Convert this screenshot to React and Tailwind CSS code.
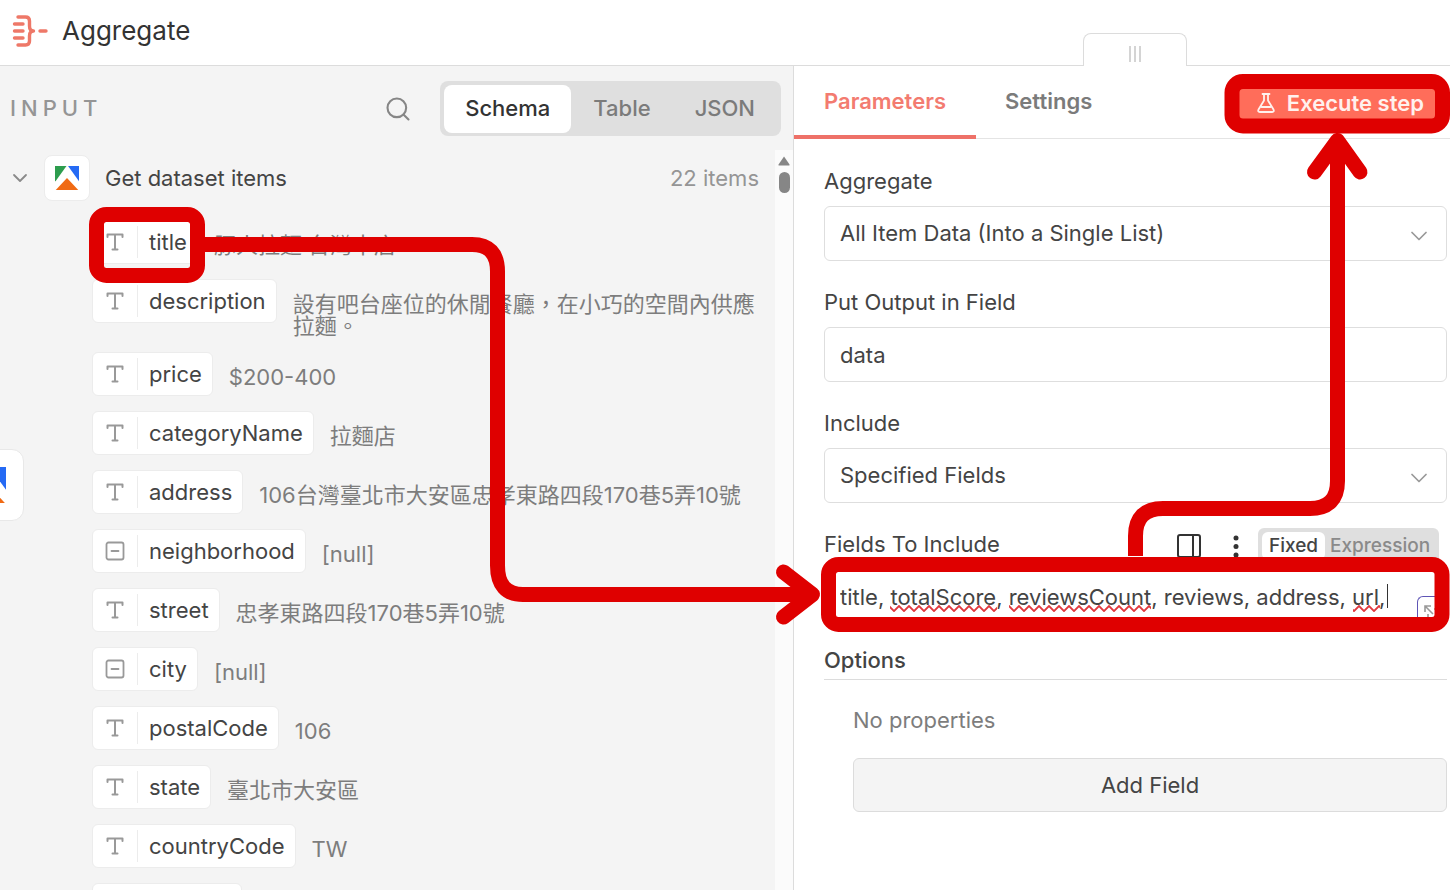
import { useState } from 'react';
import { ChevronDown, Search } from 'lucide-react';

const fields = [
  { name: 'title', type: 'string', value: '豚人拉麵 台灣本店' },
  { name: 'description', type: 'string', value: '設有吧台座位的休閒餐廳，在小巧的空間內供應拉麵。' },
  { name: 'price', type: 'string', value: '$200-400' },
  { name: 'categoryName', type: 'string', value: '拉麵店' },
  { name: 'address', type: 'string', value: '106台灣臺北市大安區忠孝東路四段170巷5弄10號' },
  { name: 'neighborhood', type: 'null', value: '[null]' },
  { name: 'street', type: 'string', value: '忠孝東路四段170巷5弄10號' },
  { name: 'city', type: 'null', value: '[null]' },
  { name: 'postalCode', type: 'string', value: '106' },
  { name: 'state', type: 'string', value: '臺北市大安區' },
  { name: 'countryCode', type: 'string', value: 'TW' },
];

const views = ['Schema', 'Table', 'JSON'];

function AggregateIcon() {
  return (
    <svg className="h-8 w-9" viewBox="0 0 36 32" fill="none" stroke="#ee7868" strokeWidth="3.4" strokeLinecap="round" strokeLinejoin="round">
      <path d="M6 2h7.500c3 0 4 1.600 4 4v5c0 3 1 5 4 5c-3 0-4 2-4 5v5c0 2.400-1 4-4 4H6" />
      <path d="M2.500 9h8.500M2.500 16h8.500M2.500 23h8.500M28 16h6" />
    </svg>
  );
}

function ApifyLogo({ className }) {
  return (
    <svg className={className} viewBox="0 0 23 23">
      <path d="M0 0h11L.5 14.500H0z" fill="#2d9d4e" />
      <path d="M12.500 0H23v14.500z" fill="#256af4" />
      <path d="M11.500 11.500L22.300 23H.7z" fill="#f06a14" />
    </svg>
  );
}

function TypeIcon({ type }) {
  if (type === 'null') {
    return (
      <svg className="h-5 w-5" viewBox="0 0 20 20" fill="none" stroke="#999" strokeWidth="1.8" strokeLinecap="round">
        <rect x="1.500" y="1.500" width="17" height="17" rx="2" />
        <path d="M6.500 10h7" />
      </svg>
    );
  }
  return (
    <svg className="h-5 w-5" viewBox="0 0 20 20" fill="none" stroke="#999" strokeWidth="2" strokeLinecap="round" strokeLinejoin="round">
      <path d="M2.500 5V2.500h15V5M10 2.500v15M7.500 17.500h5" />
    </svg>
  );
}

function SchemaRow({ field }) {
  return (
    <li className="flex items-start gap-4">
      <div className="flex h-11 shrink-0 items-center rounded-md border border-[#ececec] bg-white pr-2.5">
        <span className="flex w-11 justify-center">
          <TypeIcon type={field.type} />
        </span>
        <span className="border-l border-[#ececec] pl-[11px] text-[22px] leading-8">{field.name}</span>
      </div>
      <span className="pt-3.5 text-[22px] leading-[22px] text-[#7d7d7d]">{field.value}</span>
    </li>
  );
}

function SelectField({ id, label, options }) {
  return (
    <div className="flex flex-col gap-[11px]">
      <label htmlFor={id} className="text-[22px] leading-7">{label}</label>
      <div className="relative">
        <select id={id} className="h-[55px] w-full appearance-none rounded-md border border-[#dedede] bg-white px-[15px] text-[22px]">
          {options.map((option) => (
            <option key={option}>{option}</option>
          ))}
        </select>
        <ChevronDown className="pointer-events-none absolute top-4 right-3.5 h-7 w-7 text-[#999]" strokeWidth={1.500} />
      </div>
    </div>
  );
}

function InputPanel() {
  const [view, setView] = useState('Schema');

  return (
    <section className="flex w-[794px] shrink-0 flex-col border-r border-[#dcdcdc] bg-[#f4f4f4]">
      <div className="flex items-center pt-[15px] pr-3 pl-2.5">
        <h2 className="text-[22px] font-medium tracking-[5px] text-[#959595]">INPUT</h2>
        <button type="button" aria-label="Search" className="ml-auto text-[#868686]">
          <Search className="h-7 w-7" strokeWidth={1.800} />
        </button>
        <div className="ml-7 flex h-[55px] items-center rounded-lg bg-[#dfdfdf] p-1">
          {views.map((item) => (
            <button
              key={item}
              type="button"
              onClick={() => setView(item)}
              className={`h-12 rounded-lg text-[22px] font-medium ${
                item === view ? 'bg-white px-[21px] text-[#333]' : 'px-[22px] text-[#7b7b7b]'
              }`}
            >
              {item}
            </button>
          ))}
        </div>
      </div>

      <div className="mt-3.5 flex min-h-0 flex-1">
        <div className="min-w-0 flex-1 overflow-hidden pt-[5px] pl-2">
          <div className="flex items-center pr-4">
            <ChevronDown className="h-6 w-6 text-[#8a8a8a]" strokeWidth={1.800} />
            <span className="ml-3 flex h-[46px] w-[46px] items-center justify-center rounded-lg border border-[#ececec] bg-white">
              <ApifyLogo className="h-6 w-6" />
            </span>
            <h3 className="ml-[15px] text-[22px]">Get dataset items</h3>
            <span className="ml-auto text-[22px] text-[#959595]">22 items</span>
          </div>
          {/* Campos do schema de entrada */}
          <ul className="mt-[19px] flex flex-col gap-[15px] pr-2 pl-[84px]">
            {fields.map((field) => (
              <SchemaRow key={field.name} field={field} />
            ))}
            <li className="h-11 w-[150px] rounded-md border border-[#ececec] bg-white" />
          </ul>
        </div>
        <div className="flex w-[18px] shrink-0 flex-col items-center gap-1.5 bg-[#fbfbfb] pt-1.5">
          <svg className="h-2.5 w-3" viewBox="0 0 12 10" fill="#868686">
            <path d="M6 0.500L11.500 8.500Q12 9.500 11 9.500H1Q0 9.500 0.500 8.500z" />
          </svg>
          <span className="h-[21px] w-[11px] rounded-full bg-[#868686]" />
        </div>
      </div>
    </section>
  );
}

function ParametersPanel() {
  const [output, setOutput] = useState('data');
  const [include, setInclude] = useState('title, totalScore, reviewsCount, reviews, address, url,');

  return (
    <section className="min-w-0 flex-1 bg-white">
      <div className="flex h-[73px] border-b border-[#e4e4e4]">
        <button type="button" className="-mb-px border-b-4 border-[#ee7168] px-[30px] pt-0.5 text-[22px] font-semibold text-[#f37b70]">
          Parameters
        </button>
        <button type="button" className="px-[29px] pb-0.5 text-[22px] font-semibold text-[#7b7b7b]">
          Settings
        </button>
        <button type="button" className="mt-[19px] mr-3.5 ml-auto flex h-9 w-[198px] items-center justify-end gap-3 rounded-md bg-[#ff6d5a] pr-3 text-[22px] font-semibold text-[#fff1ee]">
          <svg className="h-5 w-[18px]" viewBox="0 0 18 20" fill="none" stroke="currentColor" strokeWidth="1.800" strokeLinecap="round" strokeLinejoin="round">
            <path d="M5.500 1h7M7 1v6.500L1.500 16.500q-1 2.500 1.300 2.500h12.400q2.300 0 1.300-2.500L11 7.500V1M4.500 14h9" />
          </svg>
          Execute step
        </button>
      </div>

      <div className="flex flex-col gap-[27px] pt-7 pr-[3px] pl-[30px]">
        <SelectField id="aggregate" label="Aggregate" options={['All Item Data (Into a Single List)', 'Individual Fields']} />
        <div className="flex flex-col gap-[11px]">
          <label htmlFor="output" className="text-[22px] leading-7">Put Output in Field</label>
          <input
            id="output"
            value={output}
            onChange={(e) => setOutput(e.target.value)}
            className="h-[55px] w-full rounded-md border border-[#dedede] px-[15px] text-[22px]"
          />
        </div>
        <SelectField id="include" label="Include" options={['Specified Fields', 'All Fields', 'All Fields Except']} />

        <div className="flex flex-col gap-[11px]">
          <div className="flex h-7 items-center pr-2">
            <label htmlFor="fields" className="text-[22px] leading-7">Fields To Include</label>
            <div className="mt-1 ml-auto flex items-center">
              <button type="button" aria-label="Toggle panel">
                <svg className="h-[26px] w-[26px]" viewBox="0 0 26 26" fill="none" stroke="#333" strokeWidth="2">
                  <rect x="2" y="2" width="22" height="22" rx="2" />
                  <path d="M17 2v22" />
                </svg>
              </button>
              <button type="button" aria-label="More options" className="ml-[30px]">
                <svg className="h-6 w-2" viewBox="0 0 8 24" fill="#333">
                  <circle cx="4" cy="4" r="2.500" />
                  <circle cx="4" cy="12.500" r="2.500" />
                  <circle cx="4" cy="21" r="2.500" />
                </svg>
              </button>
              <div className="ml-[18px] flex h-9 w-[181px] items-center rounded-md bg-[#dfdfdf] p-1 text-[19px] font-medium">
                <button type="button" className="h-7 rounded-md bg-white px-[7px]">Fixed</button>
                <button type="button" className="flex-1 text-[#8a8a8a]">Expression</button>
              </div>
            </div>
          </div>
          <div className="relative">
            <input
              id="fields"
              spellCheck={false}
              value={include}
              onChange={(e) => setInclude(e.target.value)}
              className="h-[55px] w-full rounded-md border border-[#dedede] px-[15px] text-[22px]"
            />
            <svg className="pointer-events-none absolute top-0 left-0 h-[55px] w-[623px]" viewBox="0 0 623 55" fill="none">
              <defs>
                <pattern id="wave" width="10" height="7" patternUnits="userSpaceOnUse" y="36">
                  <path d="M-1 7L0 6L5 1L10 6L11 7" stroke="#e0383e" strokeWidth="1.800" fill="none" />
                </pattern>
              </defs>
              <rect x="66" y="36" width="107" height="7" fill="url(#wave)" />
              <rect x="185" y="36" width="142" height="7" fill="url(#wave)" />
              <rect x="529" y="36" width="27" height="7" fill="url(#wave)" />
              <path d="M563.500 15v24" stroke="#333" />
            </svg>
            <button type="button" aria-label="Expand editor" className="absolute right-0 bottom-0 h-7 w-[30px] rounded-tl-md border-t border-l border-[#5f55b5] bg-white">
              <svg className="h-6 w-6" viewBox="0 0 24 24" fill="none" stroke="#999" strokeWidth="1.600">
                <path d="M7 13V7h6M7 7l8 8M10 15v4h9v-9h-3" />
              </svg>
            </button>
          </div>
        </div>
      </div>

      <div className="mt-5 mr-[3px] ml-[30px]">
        <h3 className="border-b border-[#dcdcdc] pb-[3px] text-[22px] leading-8 font-medium">Options</h3>
        <div className="pt-6 pl-[29px]">
          <p className="text-[22px] leading-8 text-[#7d7d7d]">No properties</p>
          <button type="button" className="mt-[22px] h-[54px] w-full rounded-md border border-[#dcdcdc] bg-[#f4f4f4] text-[22px]">
            Add Field
          </button>
        </div>
      </div>
    </section>
  );
}

// Red walkthrough marks that lie over the panels
function Annotations() {
  return (
    <svg className="pointer-events-none absolute top-0 left-0 h-[890px] w-[1450px]" viewBox="0 0 1450 890" fill="none" stroke="#df0000" strokeWidth="15" strokeLinejoin="round">
      <rect x="96.500" y="214.500" width="101" height="61" rx="10" />
      <rect x="1232" y="81.500" width="210.500" height="44.500" rx="11" />
      <rect x="828.500" y="564.500" width="613.500" height="60" rx="10" />
      <path d="M204 244.500h268q25.500 0 25.500 27v294q0 29 25.500 29h290" />
      <path d="M783.500 572l29 22.500l-29 22.500" strokeLinecap="round" />
      <path d="M1135.500 556v-20q0-27.500 27.500-27.500h147q27.500 0 27.500-27.500V143" />
      <path d="M1314.500 172l23-31.500l22.500 31.500" strokeLinecap="round" />
    </svg>
  );
}

export default function App() {
  return (
    <div className="relative flex h-screen flex-col overflow-hidden bg-white font-['Inter','Noto_Sans_CJK_TC',sans-serif] text-[#444]">
      <header className="flex h-[66px] shrink-0 items-center border-b border-[#dcdcdc] pb-1 pl-3">
        <AggregateIcon />
        <h1 className="ml-3.5 text-[26px] text-[#333]">Aggregate</h1>
        <div className="mr-[263px] -mb-[5px] ml-auto flex h-[33px] w-[104px] items-center justify-center gap-[3px] self-end rounded-t-lg border border-b-0 border-[#dcdcdc] bg-white pt-2">
          <span className="h-4 w-0.5 bg-[#d4d4d4]" />
          <span className="h-4 w-0.5 bg-[#d4d4d4]" />
          <span className="h-4 w-0.5 bg-[#d4d4d4]" />
        </div>
      </header>
      <main className="flex min-h-0 flex-1">
        <InputPanel />
        <ParametersPanel />
      </main>
      <div className="absolute top-[449px] -left-12 flex h-[72px] w-[72px] items-center justify-center rounded-xl border border-[#e8e8e8] bg-white">
        <ApifyLogo className="h-9 w-9" />
      </div>
      <Annotations />
    </div>
  );
}
